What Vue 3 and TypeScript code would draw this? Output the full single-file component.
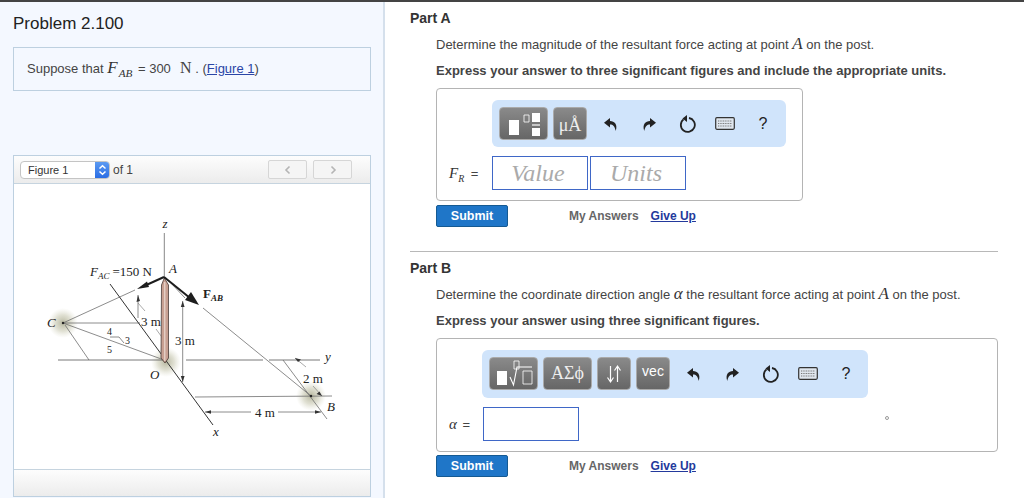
<script setup lang="ts">
interface ToolAction {
  name: string;
}
const actions: ToolAction[] = [{ name: "undo" }, { name: "redo" }, { name: "reset" }, { name: "keyboard" }, { name: "help" }];
const keyRows: number[] = [4, 6.5, 9];
</script>

<template>
  <div class="page">
    <aside class="left">
      <h1 class="title">Problem 2.100</h1>
      <div class="intro">
        Suppose that <span class="math big fab">F<sub>AB</sub></span> = 300 &nbsp;<span class="roman">N</span> . (<a class="fig-link">Figure 1</a>)
      </div>
      <section class="figure">
        <header class="figure__head">
          <div class="select">
            <span class="select__label">Figure 1</span>
            <span class="select__arrow">
              <svg width="9" height="12" viewBox="0 0 9 12"><path d="M1.5 4.5 4.5 1.8 7.5 4.5M1.5 7.5 4.5 10.2 7.5 7.5" fill="none" stroke="#fff" stroke-width="1.5" /></svg>
            </span>
          </div>
          <span class="of">of 1</span>
          <div class="pager">
            <button class="pager__btn"><svg width="8" height="10" viewBox="0 0 8 10"><path d="M5.5 1.5 2 5l3.5 3.5" fill="none" stroke="#b5b5b5" stroke-width="1.6" /></svg></button>
            <button class="pager__btn"><svg width="8" height="10" viewBox="0 0 8 10"><path d="M2.5 1.5 6 5 2.5 8.500" fill="none" stroke="#b5b5b5" stroke-width="1.6" /></svg></button>
          </div>
        </header>
        <div class="figure__body">
          <svg class="diagram" width="320" height="240" viewBox="0 0 320 240">
            <defs>
              <radialGradient id="glow">
                <stop offset="0" stop-color="#a8a88c" stop-opacity=".85" />
                <stop offset=".55" stop-color="#c2c2a8" stop-opacity=".5" />
                <stop offset="1" stop-color="#d8d8c4" stop-opacity="0" />
              </radialGradient>
            </defs>
            <circle cx="33" cy="113" r="15" fill="url(#glow)" />
            <circle cx="136" cy="152" r="15" fill="url(#glow)" />
            <circle cx="281" cy="186" r="15" fill="url(#glow)" />

            <g fill="none" stroke="#6f6f6f" stroke-width=".8">
              <path d="M134.300 23V67" stroke="#888" stroke-width="1" />
              <path d="M33 113 105 80" />
              <path d="M33 113H110" />
              <path d="M33 113 134 150" />
              <path d="M35 115 59 150" />
              <path d="M28 150H133" stroke="#555" />
              <path d="M156 150H233M239 150H290" stroke="#555" />
              <path d="M173 98 281 186" />
              <path d="M140 72 155 88" />
              <path d="M253 150 297 209" />
              <path d="M165 187 302 186" />
              <path d="M108 85V108" />
              <path d="M152.700 91V172" />
              <path d="M175 202H221M248 202H291" />
              <path d="M80 127H89L94 133" />
              <path d="M108 93 115 101" stroke-width=".6" />
              <path d="M265 148 276 157" stroke-width=".6" />
              <path d="M283 176 292 186" stroke-width=".6" />
              <path d="M126 119 134 130" stroke-width=".6" />
            </g>
            <path d="M80 74 183 215" fill="none" stroke="#333" stroke-width="1" />
            <g fill="#333">
              <path d="M108 85 106.500 92 110 91Z" />
              <path d="M152.700 91 150.800 97 154.600 97Z" />
              <path d="M152.700 172 150.800 166 154.600 166Z" />
              <path d="M175 202 181 200.200V203.800Z" />
              <path d="M291 202 285 200.200V203.800Z" />
              <path d="M265 148 271 149.500 268 152Z" />
              <path d="M292 186 286.500 184 289.500 181.500Z" />
            </g>

            <path d="M131.500 75 134.300 68 138.500 75V148L135 153 131 148Z" fill="#c8a092" stroke="#4a3b36" stroke-width=".8" />
            <path d="M134.800 72V151" stroke="#f0e2da" stroke-width="1" />

            <path d="M134 67 113 76.500" stroke="#1d1d1d" stroke-width="2" fill="none" />
            <path d="M107 79 117 71.500 119 77Z" fill="#1d1d1d" />
            <path d="M134 67 160 88" stroke="#1d1d1d" stroke-width="2" fill="none" />
            <path d="M169 95 155 90 161 82Z" fill="#1d1d1d" />
            <circle cx="33" cy="113" r="1.200" fill="#222" />
            <circle cx="281" cy="186" r="1.200" fill="#222" />

            <g class="dia" fill="#222">
              <text class="it" x="135" y="18" text-anchor="middle">z</text>
              <text class="it" x="60" y="66">F<tspan class="sub" dy="3">AC</tspan><tspan class="rm" dy="-3" dx="3">=150 N</tspan></text>
              <text class="it" x="139" y="63">A</text>
              <text class="bd" x="173" y="88">F<tspan class="sub it" dy="3">AB</tspan></text>
              <text class="it" x="17" y="117">C</text>
              <text class="rm" x="111" y="116">3 m</text>
              <text class="rm sm" x="77" y="125">4</text>
              <text class="rm sm" x="95" y="134">3</text>
              <text class="rm sm" x="77" y="143">5</text>
              <text class="rm" x="145" y="135">3 m</text>
              <text class="it" x="120" y="169">O</text>
              <text class="it" x="295" y="151">y</text>
              <text class="rm" x="273" y="173">2 m</text>
              <text class="it" x="297" y="201">B</text>
              <text class="rm" x="225" y="207">4 m</text>
              <text class="it" x="183" y="226">x</text>
            </g>
          </svg>
        </div>
        <footer class="figure__foot"></footer>
      </section>
    </aside>

    <main class="right">
      <section class="part">
        <h2 class="part__head">Part A</h2>
        <p class="part__desc">Determine the magnitude of the resultant force acting at point <span class="math big">A</span> on the post.</p>
        <p class="part__instr">Express your answer to three significant figures and include the appropriate units.</p>
        <div class="answer answer--a">
          <div class="toolbar">
            <button class="tool tool--wide">
              <svg width="36" height="26" viewBox="0 0 36 26"><path d="M3 9H13V24H3Z" fill="#fff" /><path d="M18 4H23V11H18Z" fill="none" stroke="#fff" stroke-width=".8" /><path d="M26 2H34V11H26ZM26 17H34V25H26Z" fill="#fff" /><path d="M26 14H34" stroke="#fff" stroke-width="1.200" /></svg>
            </button>
            <button class="tool tool--mid glyph glyph--unit">μÅ</button>
            <div class="actions">
              <span v-for="a in actions" :key="a.name" class="action">
                <svg v-if="a.name === 'undo'" width="16" height="16" viewBox="0 0 16 16"><path d="M7 2 1 6.800 7 11.500V8.500C10 8.500 11.800 10 12.700 15 15 8.500 11.500 5 7 5Z" fill="#222" /></svg>
                <svg v-else-if="a.name === 'redo'" width="16" height="16" viewBox="0 0 16 16"><path d="M9 2 15 6.800 9 11.500V8.500C6 8.500 4.200 10 3.300 15 1 8.500 4.500 5 9 5Z" fill="#222" /></svg>
                <svg v-else-if="a.name === 'reset'" width="18" height="18" viewBox="0 0 18 18"><path d="M5.500 4.400A7 7 0 1 0 11 3" fill="none" stroke="#222" stroke-width="1.800" /><path d="M9 0V7L4.500 3.500Z" fill="#222" /></svg>
                <svg v-else-if="a.name === 'keyboard'" width="20" height="13" viewBox="0 0 20 13">
                  <rect x=".7" y=".7" width="18.600" height="11.600" rx="1.200" fill="#dfe6ee" stroke="#333" stroke-width="1.200" />
                  <path v-for="y in keyRows" :key="y" :d="`M3 ${y}H17`" stroke="#777" stroke-width="1.100" stroke-dasharray="1 .7" />
                </svg>
                <span v-else class="help">?</span>
              </span>
            </div>
          </div>
          <div class="row">
            <span class="row__label"><span class="math eq">F<sub>R</sub></span> =</span>
            <div class="field field--ph">Value</div>
            <div class="field field--ph">Units</div>
          </div>
        </div>
        <div class="controls">
          <button class="submit">Submit</button>
          <span class="my">My Answers</span>
          <a class="give">Give Up</a>
        </div>
      </section>

      <section class="part part--b">
        <h2 class="part__head">Part B</h2>
        <p class="part__desc">Determine the coordinate direction angle <span class="math big">α</span> the resultant force acting at point <span class="math big">A</span> on the post.</p>
        <p class="part__instr">Express your answer using three significant figures.</p>
        <div class="answer answer--b">
          <div class="toolbar">
            <button class="tool tool--wide">
              <svg width="40" height="28" viewBox="0 0 40 28"><path d="M3 11H13V25H3Z" fill="#fff" /><path d="M20 1H25V9H20ZM29 11H38V24H29Z" fill="none" stroke="#fff" stroke-width=".8" /><path d="M16 17 19.500 25 23 7H38" fill="none" stroke="#fff" stroke-width="1.100" /></svg>
            </button>
            <button class="tool tool--wide glyph glyph--greek">ΑΣϕ</button>
            <button class="tool tool--mid">
              <svg width="18" height="20" viewBox="0 0 18 20"><path d="M5.500 2V17M2.500 13.500 5.500 18 8.500 13.500M12.500 18V3M9.500 6.500 12.500 2 15.500 6.500" fill="none" stroke="#fff" stroke-width="1.200" /></svg>
            </button>
            <button class="tool tool--mid vec">vec</button>
            <div class="actions">
              <span v-for="a in actions" :key="a.name" class="action">
                <svg v-if="a.name === 'undo'" width="16" height="16" viewBox="0 0 16 16"><path d="M7 2 1 6.800 7 11.500V8.500C10 8.500 11.800 10 12.700 15 15 8.500 11.500 5 7 5Z" fill="#222" /></svg>
                <svg v-else-if="a.name === 'redo'" width="16" height="16" viewBox="0 0 16 16"><path d="M9 2 15 6.800 9 11.500V8.500C6 8.500 4.200 10 3.300 15 1 8.500 4.500 5 9 5Z" fill="#222" /></svg>
                <svg v-else-if="a.name === 'reset'" width="18" height="18" viewBox="0 0 18 18"><path d="M5.500 4.400A7 7 0 1 0 11 3" fill="none" stroke="#222" stroke-width="1.800" /><path d="M9 0V7L4.500 3.500Z" fill="#222" /></svg>
                <svg v-else-if="a.name === 'keyboard'" width="20" height="13" viewBox="0 0 20 13">
                  <rect x=".7" y=".7" width="18.600" height="11.600" rx="1.200" fill="#dfe6ee" stroke="#333" stroke-width="1.200" />
                  <path v-for="y in keyRows" :key="y" :d="`M3 ${y}H17`" stroke="#777" stroke-width="1.100" stroke-dasharray="1 .7" />
                </svg>
                <span v-else class="help">?</span>
              </span>
            </div>
          </div>
          <div class="row">
            <span class="row__label row__label--b"><span class="math eq eq--a">α</span> =</span>
            <div class="field"></div>
            <span class="dot"></span>
          </div>
        </div>
        <div class="controls controls--b">
          <button class="submit">Submit</button>
          <span class="my">My Answers</span>
          <a class="give">Give Up</a>
        </div>
      </section>
    </main>
  </div>
</template>

<style>
html, body {
  margin: 0;
  background: #fff;
}
</style>

<style scoped>
.page {
  display: flex;
  width: 1024px;
  height: 498px;
  overflow: hidden;
  border-top: 2px solid #444;
  box-sizing: border-box;
  font-family: "Liberation Sans", Arial, sans-serif;
  color: #333;
}
.left {
  width: 385px;
  flex: none;
  box-sizing: border-box;
  padding: 0 13px;
  background: #f4f8ff;
  border-right: 2px solid #d5e0ec;
  display: flex;
  flex-direction: column;
}
.title {
  margin: 13px 0 0;
  font-size: 17px;
  line-height: 18px;
  font-weight: 400;
  color: #222;
}
.intro {
  margin-top: 14px;
  height: 44px;
  width: 358px;
  box-sizing: border-box;
  padding-left: 13px;
  border: 1px solid #bdd0e0;
  font-size: 13px;
  line-height: 40px;
  color: #444;
}
.math {
  font-family: "Liberation Serif", serif;
  font-style: italic;
  color: #333;
}
.math sub {
  font-size: .66em;
  line-height: 0;
}
.big {
  font-size: 17px;
}
.fab sub {
  margin-left: 1px;
  margin-right: 2px;
}
.roman {
  font-family: "Liberation Serif", serif;
  font-size: 16px;
  margin-left: 2px;
}
.fig-link {
  color: #2a45a6;
  text-decoration: underline;
}
.figure {
  margin-top: 64px;
  width: 358px;
  height: 342px;
  box-sizing: border-box;
  border: 1px solid #bdd0e0;
  display: flex;
  flex-direction: column;
  background: #fff;
}
.figure__head {
  height: 28px;
  flex: none;
  box-sizing: border-box;
  border-bottom: 1px solid #c6d4df;
  background: linear-gradient(#fdfdfd, #ececec);
  display: flex;
  align-items: center;
  padding: 0 18px 0 6px;
}
.select {
  width: 90px;
  height: 18px;
  box-sizing: border-box;
  display: flex;
  background: #fff;
  border: 1px solid #c4c4c4;
  border-radius: 4px;
  overflow: hidden;
  font-size: 11px;
  line-height: 16px;
  color: #333;
}
.select__label {
  flex: 1;
  padding-left: 7px;
}
.select__arrow {
  width: 14px;
  background: linear-gradient(#5b9af2, #2a6de4);
  display: flex;
  align-items: center;
  justify-content: center;
}
.of {
  margin-left: 3px;
  font-size: 12px;
  color: #444;
}
.pager {
  margin-left: auto;
  display: flex;
  gap: 6px;
}
.pager__btn {
  width: 39px;
  height: 19px;
  padding: 0;
  border: 1px solid #d6d6d6;
  border-radius: 2px;
  background: #f5f5f5;
  display: flex;
  align-items: center;
  justify-content: center;
}
.figure__body {
  flex: 1;
  padding: 26px 0 0 16px;
}
.diagram {
  display: block;
}
.dia text {
  font-family: "Liberation Serif", serif;
  font-size: 13px;
}
.dia .it {
  font-style: italic;
}
.dia .rm {
  font-style: normal;
  font-size: 13px;
}
.dia .bd {
  font-weight: 700;
}
.dia .sm {
  font-size: 10px;
}
.dia .sub {
  font-size: 9px;
}
.figure__foot {
  height: 27px;
  flex: none;
  box-sizing: border-box;
  border-top: 1px solid #c6d4df;
  background: linear-gradient(#fdfdfd, #ececec);
}
.right {
  flex: 1;
  padding: 0 26px 0 25px;
  min-width: 0;
}
.part__head {
  margin: 8px 0 0;
  font-size: 14px;
  line-height: 16px;
  font-weight: 700;
  color: #333;
}
.part__desc {
  margin: 9px 0 0 26px;
  font-size: 13px;
  line-height: 18px;
  color: #444;
}
.part__instr {
  margin: 8px 0 0 26px;
  font-size: 13px;
  line-height: 18px;
  font-weight: 700;
  color: #444;
}
.answer {
  margin: 8px 0 0 26px;
  box-sizing: border-box;
  border: 1px solid #b4b4b4;
  border-radius: 4px;
  padding: 11px 0 10px;
  background: #fff;
}
.answer--a {
  width: 367px;
  height: 113px;
}
.answer--a .toolbar {
  margin-left: 55px;
  width: 294px;
  height: 47px;
}
.answer--b {
  width: 562px;
  height: 114px;
}
.answer--b .toolbar {
  margin-left: 45px;
  width: 386px;
  height: 48px;
}
.toolbar {
  box-sizing: border-box;
  background: #d0e4fb;
  border-radius: 6px;
  padding: 7px 0 7px 7px;
  display: flex;
  gap: 5px;
  align-items: flex-start;
}
.tool {
  flex: none;
  height: 33px;
  padding: 0;
  border: 1px solid #aaa;
  border-radius: 4px;
  background: linear-gradient(#8a8a8a, #666);
  color: #fff;
  display: flex;
  align-items: center;
  justify-content: center;
}
.tool--wide {
  width: 49px;
}
.tool--mid {
  width: 34px;
}
.glyph {
  font-family: "Liberation Serif", serif;
}
.glyph--unit {
  font-size: 18px;
  padding-top: 4px;
  color: #eee;
}
.glyph--greek {
  font-size: 18px;
  color: #eee;
}
.vec {
  font-family: "Liberation Sans", sans-serif;
  font-size: 14px;
  padding-bottom: 6px;
}
.actions {
  flex: none;
  display: flex;
  height: 33px;
  align-items: center;
}
.action {
  flex: none;
  width: 38px;
  display: flex;
  justify-content: center;
  align-items: center;
}
.help {
  font-size: 16px;
  color: #222;
}
.row {
  display: flex;
  margin-top: 9px;
  gap: 2px;
  align-items: center;
  position: relative;
}
.row__label {
  width: 53px;
  box-sizing: border-box;
  padding-left: 12px;
  font-size: 13px;
  color: #444;
}
.row__label--b {
  width: 44px;
}
.eq {
  font-size: 15px;
  margin-right: 3px;
}
.eq--a {
  margin-right: 2px;
}
.field {
  width: 96px;
  height: 34px;
  box-sizing: border-box;
  border: 1px solid #3f67c7;
  background: #fff;
}
.field--ph {
  font-family: "Liberation Serif", serif;
  font-style: italic;
  font-size: 24px;
  line-height: 32px;
  color: #aaa;
  text-align: center;
  padding-right: 4px;
}
.dot {
  margin-left: 304px;
  margin-top: -12px;
  width: 4px;
  height: 4px;
  box-sizing: border-box;
  border: 1px solid #999;
  border-radius: 50%;
}
.controls {
  margin: 4px 0 0 26px;
  display: flex;
  align-items: center;
  height: 22px;
  font-size: 12px;
  font-weight: 700;
}
.controls--b {
  margin-top: 3px;
}
.submit {
  width: 72px;
  height: 22px;
  padding: 0;
  border: 1px solid #155a92;
  border-radius: 2px;
  background: #1f76c8;
  color: #fff;
  font: 700 12.500px "Liberation Sans", sans-serif;
}
.my {
  margin-left: 61px;
  color: #666;
}
.give {
  margin-left: 12px;
  color: #23399c;
  text-decoration: underline;
}
.part--b {
  margin-top: 24px;
  border-top: 1px solid #b8b8b8;
}
.part--b .part__head {
  margin-top: 8px;
}
.part--b .part__desc {
  margin-top: 9px;
}
</style>
